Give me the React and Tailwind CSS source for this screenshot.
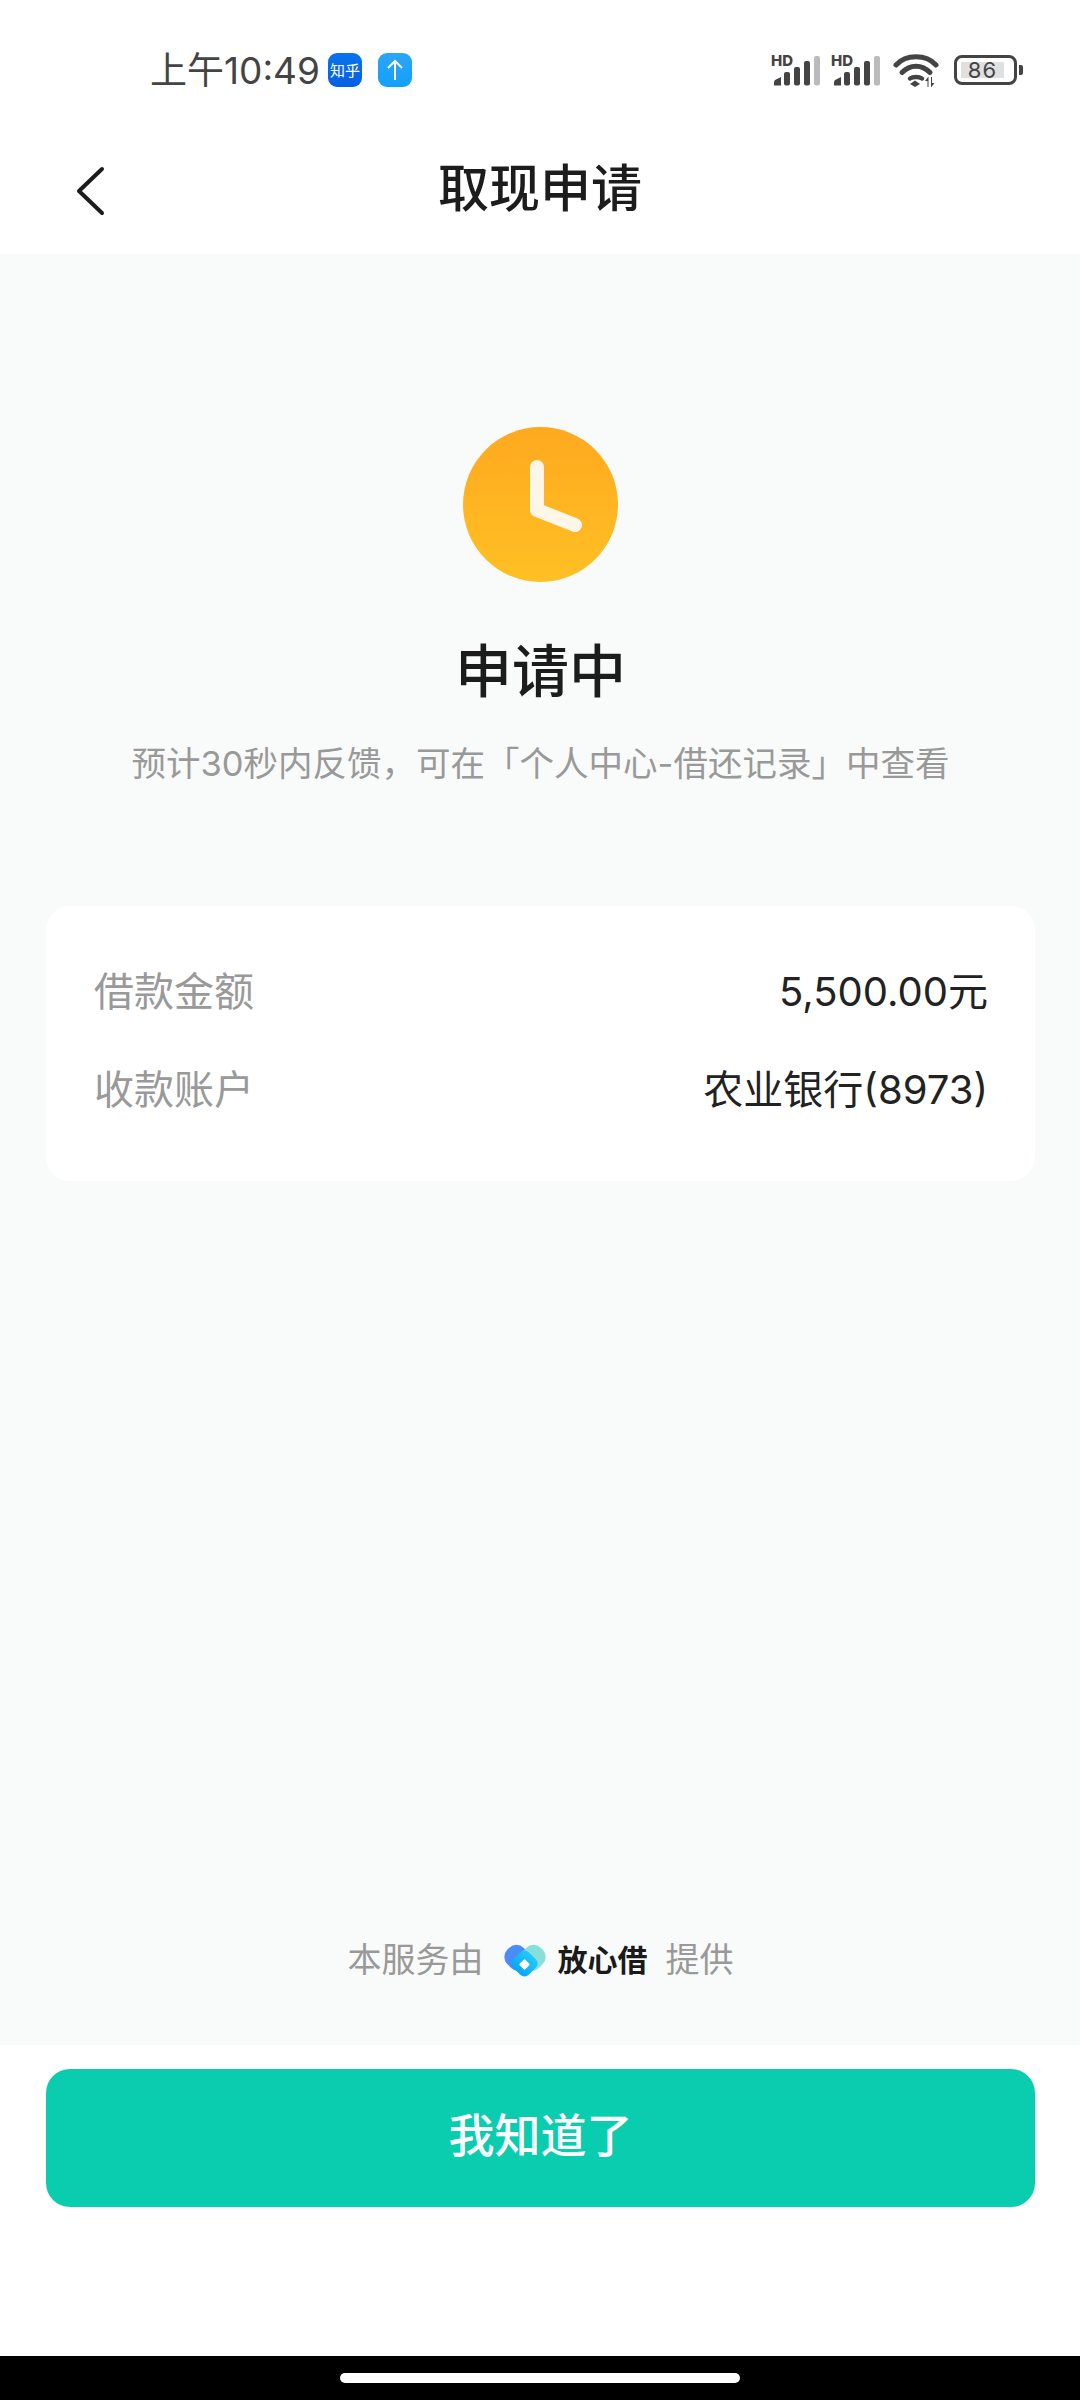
import React from "react";

function Signal() {
  return (
    <svg className="-mt-[6px]" width="50" height="40" viewBox="0 -6 50 40">
      <text x="0" y="13" fontSize="15" fontWeight="800" fill="#444" fontFamily="Inter, sans-serif">HD</text>
      <path d="M3 32.5v-3.5a3 3 0 0 1 2-2.500l5-2.500v8.500z" fill="#444" />
      <rect x="13" y="19" width="6" height="13.500" rx="2" fill="#444" />
      <rect x="23" y="14" width="6" height="18.500" rx="2" fill="#444" />
      <rect x="33" y="8" width="6" height="24.500" rx="2" fill="#444" />
      <rect x="43" y="3" width="6" height="29.500" rx="2" fill="#bbb" />
    </svg>
  );
}

function StatusBar() {
  return (
    <div className="h-[110px] pt-[30px] pl-[150px] pr-[57px] flex items-center justify-between bg-white">
      <div className="flex items-center">
        <span className="text-[37px] leading-none text-[#444]">上午10:49</span>
        <div className="ml-[8px] w-[34px] h-[34px] rounded-[9px] bg-gradient-to-b from-[#0a74f0] to-[#0660e0] flex items-center justify-center">
          <span className="text-[15px] leading-none text-white whitespace-nowrap">知乎</span>
        </div>
        <div className="ml-[16px] w-[34px] h-[34px] rounded-[9px] bg-gradient-to-b from-[#2aa5f8] to-[#12a0fa] flex items-center justify-center">
          <svg width="20" height="22" viewBox="0 0 20 22" fill="none" stroke="#fff" strokeWidth="2">
            <path d="M10 21V2M3 9l7-7 7 7" />
          </svg>
        </div>
      </div>
      <div className="flex items-center">
        <Signal />
        <div className="ml-[10px]"><Signal /></div>
        <svg className="ml-[12px]" width="46" height="35" viewBox="0 0 46 35" fill="none">
          <path d="M3 12C13 1 33 1 43 12" stroke="#444" strokeWidth="5" strokeLinecap="round" />
          <path d="M9 19.500C17 11 29 11 37 19.500" stroke="#444" strokeWidth="5" strokeLinecap="round" />
          <path d="M17 25.500C20 23.500 26 23.500 29 25.500" stroke="#444" strokeWidth="4.500" strokeLinecap="round" />
          <path d="M17 31l5-3.500 5 3.500-5 3z" fill="#444" />
          <path d="M34.500 34v-6h-2.500l3.500-4.500v10.500zM39 24v6h2.500L38 34.500V24z" fill="#444" />
        </svg>
        <div className="ml-[15px] w-[63px] h-[30px] rounded-[8px] border-[3px] border-[#444] flex items-center p-[4px]">
          <div className="w-[43px] h-full bg-[#e0e0e0] flex items-center justify-center">
            <span className="text-[22px] leading-none tracking-[1px] text-[#444] whitespace-nowrap">86</span>
          </div>
        </div>
        <div className="ml-[2px] w-[4px] h-[10px] rounded-r-[2px] bg-[#444]" />
      </div>
    </div>
  );
}

function Header() {
  return (
    <div className="relative h-[144px] bg-white flex items-center justify-center">
      <svg className="absolute left-[74px] top-[56px]" width="32" height="50" viewBox="0 0 32 50" fill="none">
        <path d="M28 3L5 25l23 22" stroke="#1c1c1c" strokeWidth="4" strokeLinecap="round" strokeLinejoin="round" />
      </svg>
      <span className="text-[51px] leading-none font-medium text-[#1c1c1c] mt-[12px]">取现申请</span>
    </div>
  );
}

function Row({ label, value }) {
  return (
    <div className="flex items-center justify-between h-[98px]">
      <span className="text-[40px] leading-none text-[#999]">{label}</span>
      <span className="text-[40px] leading-none text-[#222]">{value}</span>
    </div>
  );
}

function Logo() {
  return (
    <svg width="46" height="36" viewBox="0 0 46 36">
      <defs>
        <linearGradient id="lg" x1="0" y1="0" x2="0" y2="1">
          <stop offset="0" stopColor="#22c9fb" />
          <stop offset="1" stopColor="#0aa5f5" />
        </linearGradient>
      </defs>
      <rect x="4" y="3" width="23" height="26" rx="10" transform="rotate(-45 15.500 16)" fill="#4a8cf7" />
      <rect x="19" y="3" width="23" height="26" rx="10" transform="rotate(45 30.500 16)" fill="#86e0da" />
      <rect x="11.500" y="10.500" width="22" height="22" rx="6" transform="rotate(45 22.500 21.500)" fill="url(#lg)" />
      <rect x="18.500" y="18.500" width="8" height="8" rx="1.500" transform="rotate(45 22.500 22.500)" fill="#fff" />
    </svg>
  );
}

export default function App() {
  return (
    <div className="w-[1080px] h-[2400px] flex flex-col bg-white font-['Inter','Noto_Sans_CJK_SC',sans-serif]">
      <StatusBar />
      <Header />
      <main className="flex-1 bg-[#f9fbfa] flex flex-col items-center pt-[173px] pl-[46px] pr-[45px]">
        <div className="w-[155px] h-[155px] rounded-full bg-gradient-to-b from-[#fea91f] to-[#ffc024] flex items-center justify-center">
          <svg width="155" height="155" viewBox="0 0 155 155" fill="none">
            <path d="M74 40v43l38 15" stroke="#fff6ea" strokeWidth="14" strokeLinecap="round" strokeLinejoin="round" />
          </svg>
        </div>
        <h1 className="mt-[61px] text-[57px] leading-none font-medium text-[#1c1c1c]">申请中</h1>
        <p className="mt-[47px] text-[34.500px] leading-none text-[#999] whitespace-nowrap">预计30秒内反馈，可在「个人中心-借还记录」中查看</p>
        <section className="mt-[124px] w-full h-[275px] bg-white rounded-[24px] pl-[48px] pr-[47px] pb-[5px] flex flex-col justify-center">
          <Row label="借款金额" value="5,500.00元" />
          <Row label="收款账户" value="农业银行(8973)" />
        </section>
        <div className="flex-1" />
        <footer className="mb-[67px] flex items-center">
          <span className="text-[34px] leading-none text-[#999]">本服务由</span>
          <span className="ml-[18px]"><Logo /></span>
          <span className="ml-[10px] text-[30px] leading-none font-bold text-[#1a1a1a]">放心借</span>
          <span className="ml-[18px] text-[34px] leading-none text-[#999]">提供</span>
        </footer>
      </main>
      <div className="h-[311px] bg-white pl-[46px] pr-[45px] pt-[24px]">
        <button className="w-full h-[138px] pb-[6px] rounded-[24px] bg-[#0acdb0] text-white text-[46px] leading-none font-medium">我知道了</button>
      </div>
      <div className="h-[44px] bg-black flex items-start justify-center pt-[17px]">
        <div className="w-[400px] h-[10px] rounded-full bg-white" />
      </div>
    </div>
  );
}
